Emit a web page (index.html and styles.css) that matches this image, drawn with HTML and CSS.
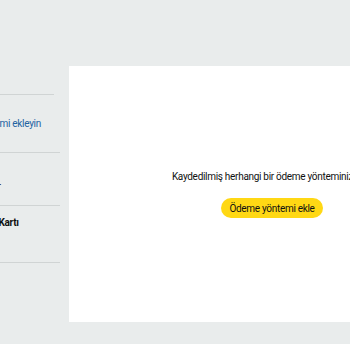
FILE: index.html
```html
<!DOCTYPE html>
<html lang="tr">
<head>
    <meta charset="UTF-8">
    <meta name="viewport" content="width=device-width, initial-scale=1.0">
    <title>Cüzdan</title>
    <link rel="stylesheet" href="styles.css">
</head>
<body>
    <div class="page">
        <div class="top-space"></div>
        <div class="main">
            <aside class="sidebar">
                <ul class="side-list">
                    <li class="side-head"></li>
                    <li class="side-item link-item"><a href="#">Ödeme yöntemi ekleyin</a></li>
                    <li class="side-item plain-item">Kayıtlı kartlar</li>
                    <li class="side-item bold-item">Hediye Kartı</li>
                </ul>
            </aside>
            <section class="panel">
                <p class="empty-text">Kaydedilmiş herhangi bir ödeme yönteminiz yok.</p>
                <button class="add-btn" type="button">Ödeme yöntemi ekle</button>
            </section>
        </div>
    </div>
</body>
</html>
```

FILE: styles.css
```css
* {
    margin: 0;
    padding: 0;
    box-sizing: border-box;
}

body {
    background: #fff;
    overflow: hidden;
    font-family: Roboto, "Liberation Sans", sans-serif;
    color: #0f1111;
    letter-spacing: -0.3px;
}

.page {
    height: 344px;
    background: #e9ecec;
}

.top-space {
    height: 66px;
}

.main {
    display: flex;
    height: 256px;
}

.sidebar {
    flex: 0 0 62px;
    margin-right: 7px;
    overflow: hidden;
}

.side-list {
    list-style: none;
    width: 116px;
    margin-left: -56px;
    font-size: 10px;
    line-height: 14px;
}

.side-head {
    height: 29px;
    margin-right: 6px;
    border-bottom: 1px solid #d0d4d4;
}

.side-item {
    border-bottom: 1px solid #d0d4d4;
    white-space: nowrap;
}

.link-item {
    height: 58px;
    padding-top: 22px;
}

.link-item a {
    color: #2162a1;
    text-decoration: none;
}

.plain-item {
    height: 53px;
    padding-top: 27px;
    padding-left: 3px;
}

.bold-item {
    height: 57px;
    padding-top: 10px;
    padding-left: 23px;
    font-weight: 700;
}

.panel {
    flex: 0 0 406px;
    background: #fff;
    display: flex;
    flex-direction: column;
    align-items: center;
    justify-content: center;
    gap: 14px;
}

.empty-text {
    font-size: 10px;
    line-height: 14px;
    white-space: nowrap;
}

.add-btn {
    height: 20px;
    padding: 0 8px;
    border: none;
    border-radius: 10px;
    background: #ffd814;
    color: #0f1111;
    font-family: inherit;
    font-size: 10px;
    letter-spacing: inherit;
    cursor: pointer;
}
```
